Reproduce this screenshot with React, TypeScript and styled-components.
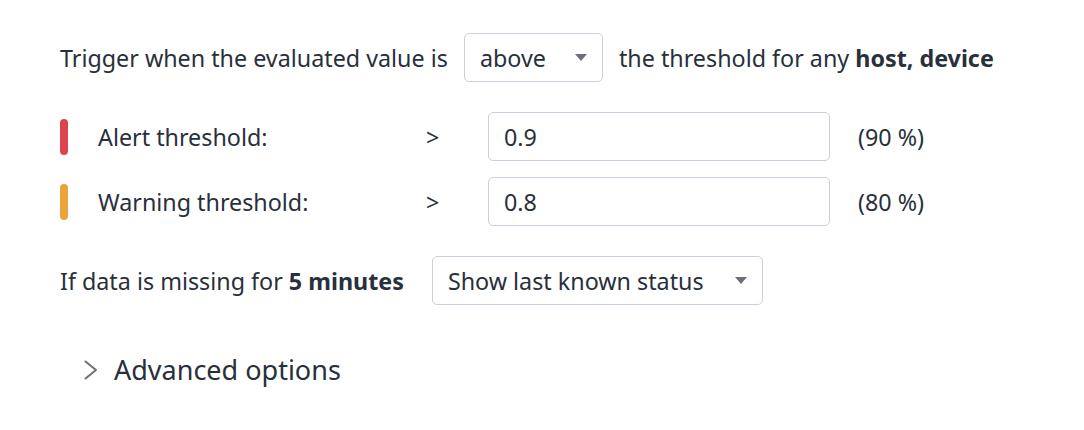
import styled, { createGlobalStyle } from "styled-components";

const GlobalStyles = createGlobalStyle`
  body {
    margin: 0;
    background: #ffffff;
    font-family: "Noto Sans", "Open Sans", sans-serif;
    color: #28303b;
  }
`;

const Page = styled.div`
  padding: 33px 0 0 60px;
  font-size: 23.3px;
`;

const Line = styled.div<{ $gap?: number }>`
  display: flex;
  align-items: center;
  gap: ${(p) => p.$gap ?? 16}px;
  height: 49px;
`;

const Bold = styled.b`
  font-weight: 700;
`;

const Select = styled.div<{ $width: number }>`
  box-sizing: border-box;
  width: ${(p) => p.$width}px;
  height: 49px;
  border: 1px solid #cdd0dc;
  border-radius: 5px;
  display: flex;
  align-items: center;
  justify-content: space-between;
  padding: 0 15px 0 15px;
`;

const Caret = styled.span`
  width: 0;
  height: 0;
  border-left: 6.5px solid transparent;
  border-right: 6.5px solid transparent;
  border-top: 7px solid #6d7079;
`;

const Thresholds = styled.div`
  display: grid;
  grid-template-columns: 8px 358px 62px 342px auto;
  row-gap: 16px;
  align-items: center;
  margin: 30px 0 30px;
`;

const Bar = styled.span<{ $color: string }>`
  width: 8px;
  height: 36px;
  border-radius: 4px;
  background: ${(p) => p.$color};
`;

const Label = styled.span`
  padding-left: 30px;
`;

const Op = styled.span``;

const Input = styled.div`
  box-sizing: border-box;
  height: 49px;
  border: 1px solid #cdd0dc;
  border-radius: 5px;
  display: flex;
  align-items: center;
  padding-left: 15px;
`;

const Percent = styled.span`
  padding-left: 28px;
`;

const Advanced = styled.div`
  display: flex;
  align-items: center;
  gap: 16px;
  margin: 46px 0 0 24px;
  font-size: 27px;
  color: #28303b;
`;

const Chevron = () => (
  <svg width="14" height="20" viewBox="0 0 14 20" fill="none">
    <polyline
      points="1.5,1.5 12,10 1.5,18.5"
      stroke="#6d7079"
      strokeWidth="2"
      strokeLinecap="round"
      strokeLinejoin="round"
    />
  </svg>
);

const rows = [
  { label: "Alert threshold:", value: "0.9", pct: "(90 %)", color: "#dc4450" },
  { label: "Warning threshold:", value: "0.8", pct: "(80 %)", color: "#eca33a" },
];

const App = () => (
  <>
    <GlobalStyles />
    <Page>
      <Line>
        <span>Trigger when the evaluated value is</span>
        <Select $width={139}>
          above
          <Caret />
        </Select>
        <span>
          the threshold for any <Bold>host, device</Bold>
        </span>
      </Line>
      <Thresholds>
        {rows.map((r) => (
          <>
            <Bar $color={r.color} />
            <Label>{r.label}</Label>
            <Op>&gt;</Op>
            <Input>{r.value}</Input>
            <Percent>{r.pct}</Percent>
          </>
        ))}
      </Thresholds>
      <Line $gap={28}>
        <span>
          If data is missing for <Bold>5 minutes</Bold>
        </span>
        <Select $width={331}>
          Show last known status
          <Caret />
        </Select>
      </Line>
      <Advanced>
        <Chevron />
        Advanced options
      </Advanced>
    </Page>
  </>
);

export default App;
